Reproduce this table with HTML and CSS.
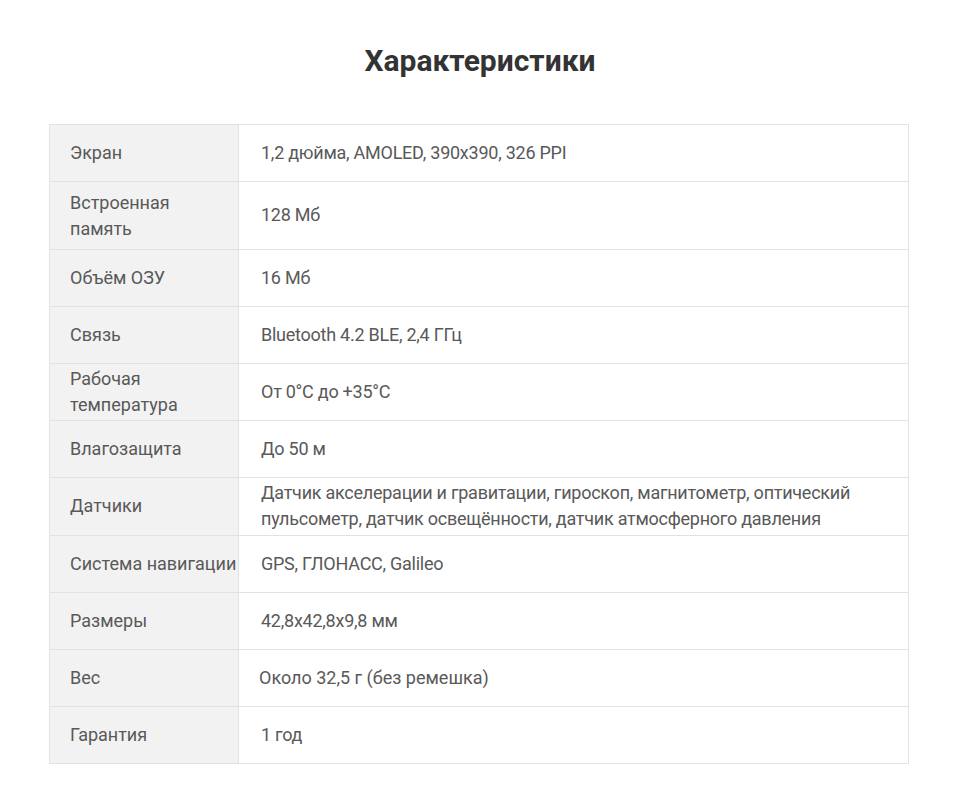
FILE: index.html
```html
<!DOCTYPE html>
<html lang="ru">
<head>
<meta charset="utf-8">
<title>Характеристики</title>
<link rel="stylesheet" href="styles.css">
</head>
<body>
<div class="page">
  <h1 class="title">Характеристики</h1>
  <table class="specs">
    <tr><td class="key">Экран</td><td class="val">1,2 дюйма, AMOLED, 390x390, 326 PPI</td></tr>
    <tr class="tall"><td class="key">Встроенная<br>память</td><td class="val">128 Мб</td></tr>
    <tr><td class="key">Объём ОЗУ</td><td class="val">16 Мб</td></tr>
    <tr><td class="key">Связь</td><td class="val">Bluetooth 4.2 BLE, 2,4 ГГц</td></tr>
    <tr><td class="key">Рабочая<br>температура</td><td class="val">От 0°C до +35°C</td></tr>
    <tr><td class="key">Влагозащита</td><td class="val">До 50 м</td></tr>
    <tr class="wide"><td class="key">Датчики</td><td class="val">Датчик акселерации и гравитации, гироскоп, магнитометр, оптический<br>пульсометр, датчик освещённости, датчик атмосферного давления</td></tr>
    <tr><td class="key">Система навигации</td><td class="val">GPS, ГЛОНАСС, Galileo</td></tr>
    <tr><td class="key">Размеры</td><td class="val">42,8x42,8x9,8 мм</td></tr>
    <tr><td class="key">Вес</td><td class="val val-shift">Около 32,5 г (без ремешка)</td></tr>
    <tr><td class="key">Гарантия</td><td class="val">1 год</td></tr>
  </table>
</div>
</body>
</html>
```

FILE: styles.css
```css
html, body {
  margin: 0;
  padding: 0;
  background: #ffffff;
}
body {
  font-family: Roboto, "Noto Sans", sans-serif;
  color: #595959;
}
.page {
  padding-top: 43px;
  padding-bottom: 47px;
}
.title {
  margin: 0 0 45px 0;
  text-align: center;
  font-size: 30px;
  line-height: 36px;
  font-weight: 700;
  color: #333333;
}
.specs {
  border-collapse: collapse;
  width: 860px;
  margin-left: 49px;
  font-size: 18px;
  line-height: 26px;
}
.specs td {
  border: 1px solid #e2e2e2;
  height: 57px;
  box-sizing: border-box;
  vertical-align: middle;
  padding: 1px 10px 2px 22px;
}
.specs .val {
  letter-spacing: -0.25px;
}
.specs .key {
  width: 189px;
  background: #f2f2f2;
  padding-left: 20px;
  padding-right: 0;
}
.specs .tall .key {
  padding-top: 8px;
  padding-bottom: 7px;
}
.specs .wide td {
  height: 58px;
}
.specs .val-shift {
  padding-left: 20px;
  letter-spacing: 0;
}
```
